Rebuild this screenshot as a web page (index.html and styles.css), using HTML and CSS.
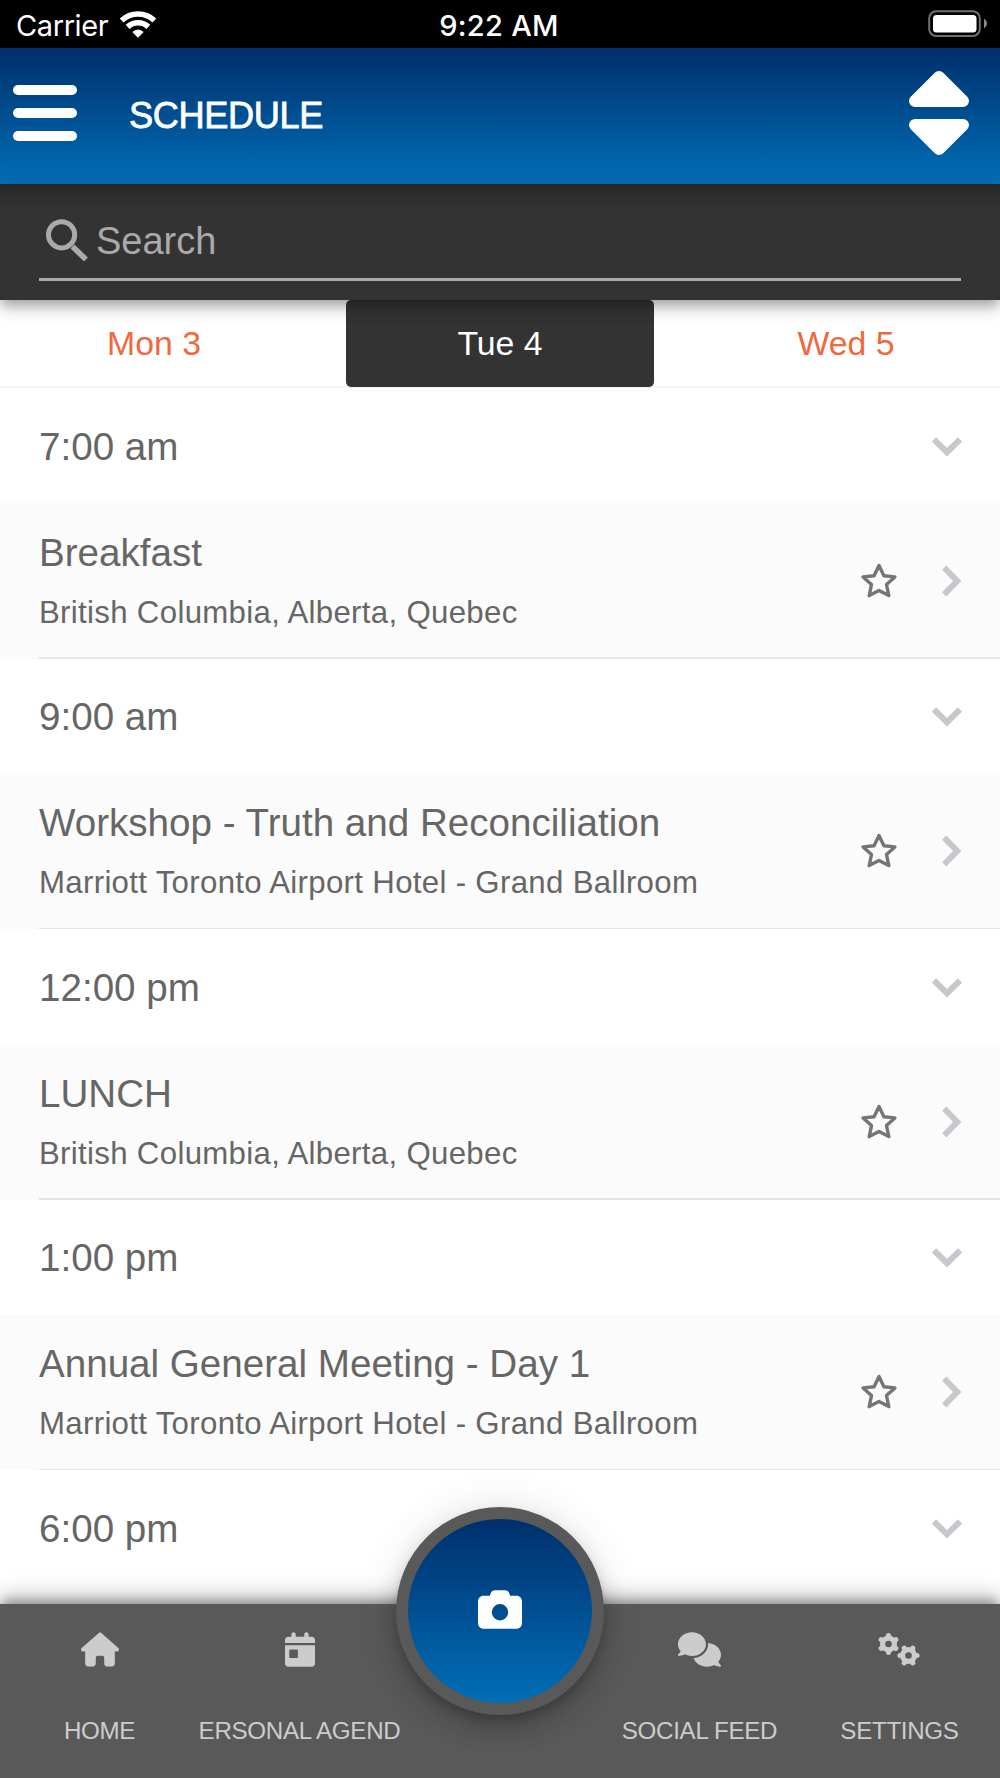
FILE: index.html
```
<!DOCTYPE html>
<html lang="en">
<head>
  <meta charset="UTF-8">
  <meta name="viewport" content="width=device-width, initial-scale=1.0">
  <title>Schedule</title>
  <link rel="stylesheet" href="styles.css">
</head>
<body>
<!-- shared icons -->
<svg class="sprite" width="0" height="0">
  <symbol id="star" viewBox="-18 -19 36 36"><path d="M0-16.5L4.9-6.2 15.900-5.100 7.500 2.500 9.800 13.600 0 8.400-9.800 13.600-7.500 2.500-15.900-5.100-4.900-6.200Z" fill="none" stroke="#757575" stroke-width="3.400" stroke-linejoin="round"/></symbol>
  <symbol id="right" viewBox="0 0 20 32"><path d="M2.200 2.700L15.200 16 2.200 29.300" fill="none" stroke="#c7c7cc" stroke-width="6"/></symbol>
  <symbol id="down" viewBox="0 0 30 20"><path d="M2 2.500L15 15.200 28 2.500" fill="none" stroke="#c7c7cc" stroke-width="6"/></symbol>
  <symbol id="gear" viewBox="-12 -12 24 24">
    <g fill="none" stroke="currentColor"><circle r="5.9" stroke-width="5.2"/>
    <path stroke-width="5" stroke-linecap="round" d="M0-7V-8.600M0 7V8.600M6.100-3.500L7.400-4.300M6.100 3.500L7.400 4.300M-6.100-3.500L-7.400-4.300M-6.100 3.500L-7.400 4.300"/></g>
  </symbol>
</svg>

<div class="status-bar">
  <div class="carrier">
    <span>Carrier</span>
    <svg width="38" height="28" viewBox="-19 -28 38 28">
      <path d="M-16.400-17.500A24 24 0 0 1 16.400-17.500M-10.400-11.100A15.200 15.200 0 0 1 10.400-11.100" fill="none" stroke="#fff" stroke-width="5.600"/>
      <path d="M0-.3L-5.700-6Q0-11 5.700-6Z" fill="#fff"/>
    </svg>
  </div>
  <div class="clock">9:22 AM</div>
  <div class="battery">
    <svg width="60" height="28" viewBox="0 0 60 28">
      <rect x="1.2" y="1.2" width="50.600" height="24.800" rx="7" fill="none" stroke="#6f6f6f" stroke-width="2"/>
      <rect x="5" y="5" width="43.500" height="17.500" rx="3.500" fill="#fff"/>
      <path d="M56 8.500Q59 10.500 59 13.500T56 18.500Z" fill="#8a8a8a"/>
    </svg>
  </div>
</div>

<header class="header">
  <button class="menu-btn"><i></i><i></i><i></i></button>
  <h1>SCHEDULE</h1>
  <svg class="sort" width="62" height="86" viewBox="0 0 62 86" fill="#fff" stroke="#fff" stroke-width="12" stroke-linejoin="round">
    <path d="M7 31L31 7 55 31Z"/>
    <path d="M7 55L31 79 55 55Z"/>
  </svg>
</header>

<div class="search-bar">
  <div class="search-field">
    <svg width="42" height="42" viewBox="0 0 42 42" fill="none" stroke="#aaa">
      <circle cx="15.600" cy="15.800" r="13.100" stroke-width="5"/>
      <path d="M26.500 27.500L40 40.500" stroke-width="5.600"/>
    </svg>
    <span>Search</span>
  </div>
</div>

<nav class="days">
  <a class="day">Mon 3</a>
  <a class="day active">Tue 4</a>
  <a class="day">Wed 5</a>
</nav>

<main class="list">
  <div class="time"><span>7:00 am</span><svg width="30" height="20"><use href="#down"/></svg></div>
  <div class="item">
    <div class="info">
      <div class="title">Breakfast</div>
      <div class="place">British Columbia, Alberta, Quebec</div>
    </div>
    <svg class="star" width="36" height="36"><use href="#star"/></svg>
    <svg width="20" height="32"><use href="#right"/></svg>
  </div>

  <div class="time"><span>9:00 am</span><svg width="30" height="20"><use href="#down"/></svg></div>
  <div class="item">
    <div class="info">
      <div class="title">Workshop - Truth and Reconciliation</div>
      <div class="place">Marriott Toronto Airport Hotel - Grand Ballroom</div>
    </div>
    <svg class="star" width="36" height="36"><use href="#star"/></svg>
    <svg width="20" height="32"><use href="#right"/></svg>
  </div>

  <div class="time"><span>12:00 pm</span><svg width="30" height="20"><use href="#down"/></svg></div>
  <div class="item">
    <div class="info">
      <div class="title">LUNCH</div>
      <div class="place">British Columbia, Alberta, Quebec</div>
    </div>
    <svg class="star" width="36" height="36"><use href="#star"/></svg>
    <svg width="20" height="32"><use href="#right"/></svg>
  </div>

  <div class="time"><span>1:00 pm</span><svg width="30" height="20"><use href="#down"/></svg></div>
  <div class="item">
    <div class="info">
      <div class="title">Annual General Meeting - Day 1</div>
      <div class="place">Marriott Toronto Airport Hotel - Grand Ballroom</div>
    </div>
    <svg class="star" width="36" height="36"><use href="#star"/></svg>
    <svg width="20" height="32"><use href="#right"/></svg>
  </div>

  <div class="time"><span>6:00 pm</span><svg width="30" height="20"><use href="#down"/></svg></div>
</main>

<footer class="tabbar">
  <a class="tab">
    <svg width="38" height="35" viewBox="0 0 576 512"><path fill="currentColor" d="M575.8 255.5c0 18-15 32.1-32 32.1h-32l.7 160.2V472c0 22.1-17.900 40-40 40H392c-22.100 0-40-17.900-40-40V384c0-17.700-14.300-32-32-32H256c-17.700 0-32 14.300-32 32v88c0 22.100-17.900 40-40 40H104c-22.100 0-40-17.900-40-40V287.600H32c-18 0-32-14-32-32.100c0-9 3-17 10-24L266.400 8c7-7 15-8 22-8s15 2 21 7L564.800 231.500c8 7 12 15 11 24z"/></svg>
    <span>HOME</span>
  </a>
  <a class="tab">
    <svg width="30" height="35" viewBox="0 0 448 512"><path fill="currentColor" d="M128 0c17.700 0 32 14.300 32 32V64H288V32c0-17.700 14.300-32 32-32s32 14.300 32 32V64h48c26.500 0 48 21.500 48 48v48H0V112C0 85.500 21.500 64 48 64H96V32c0-17.700 14.300-32 32-32zM0 192H448V464c0 26.500-21.500 48-48 48H48c-26.500 0-48-21.500-48-48V192zm80 64c-8.800 0-16 7.200-16 16v96c0 8.800 7.200 16 16 16h96c8.800 0 16-7.200 16-16V272c0-8.800-7.200-16-16-16H80z"/></svg>
    <span>ERSONAL AGEND</span>
  </a>
  <div class="tab">
    <a class="camera">
      <svg width="44" height="39" viewBox="0 32 512 448"><path fill="#fff" d="M149.100 64.800L138.700 96H64C28.700 96 0 124.700 0 160V416c0 35.300 28.700 64 64 64H448c35.300 0 64-28.700 64-64V160c0-35.300-28.700-64-64-64H373.300L362.900 64.800C356.400 45.200 338.100 32 317.400 32H194.600c-20.700 0-39 13.200-45.500 32.800zM256 192a96 96 0 1 1 0 192 96 96 0 1 1 0-192z"/></svg>
    </a>
  </div>
  <a class="tab">
    <svg width="43" height="35" viewBox="0 0 640 512"><path fill="currentColor" d="M208 352c114.900 0 208-78.800 208-176S322.900 0 208 0S0 78.800 0 176c0 38.600 14.700 74.300 39.600 103.400c-3.500 9.400-8.700 17.700-14.200 24.700c-4.800 6.200-9.700 11-13.300 14.300c-1.800 1.600-3.300 2.900-4.300 3.700l-1.300 1C1 327.200-1.400 334.400 .8 340.900S9.100 352 16 352c21.800 0 43.800-5.600 62.100-12.500c9.200-3.500 17.800-7.400 25.200-11.400C134.100 343.300 169.800 352 208 352zM448 176c0 112.300-99.100 196.900-216.500 207C255.800 457.400 336.400 512 432 512c38.200 0 73.900-8.700 104.700-23.900c7.500 4 16 7.900 25.200 11.400c18.300 6.900 40.300 12.500 62.100 12.500c6.900 0 13.100-4.500 15.200-11.100c2.100-6.600-.2-13.800-5.800-17.900l-1.300-1c-1-.8-2.500-2-4.300-3.700c-3.600-3.300-8.500-8.100-13.300-14.300c-5.500-7-10.700-15.400-14.200-24.700c24.900-29 39.600-64.700 39.600-103.400c0-92.800-84.900-168.900-192.600-175.500c.4 5.100 .6 10.300 .6 15.500z"/></svg>
    <span>SOCIAL FEED</span>
  </a>
  <a class="tab">
    <svg width="43" height="35" viewBox="0 0 43 35">
      <use href="#gear" x="-12" y="-12" width="24" height="24" transform="translate(10.500 12)"/>
      <use href="#gear" x="-12" y="-12" width="24" height="24" transform="translate(30.500 23.500) rotate(90)"/>
    </svg>
    <span>SETTINGS</span>
  </a>
</footer>
</body>
</html>
```
FILE: styles.css
```
* {
  box-sizing: border-box;
}
body {
  margin: 0;
  height: 1778px;
  overflow: hidden;
  display: flex;
  flex-direction: column;
  background: #fff;
  color: #666;
  font-family: "Liberation Sans", Arial, sans-serif;
}
svg {
  display: block;
  flex: none;
}
.sprite {
  position: absolute;
}
.status-bar {
  height: 48px;
  flex: none;
  padding: 0 12px 0 16px;
  display: grid;
  grid-template-columns: 1fr auto 1fr;
  align-items: center;
  background: #000;
  color: #fff;
  font-family: Inter, sans-serif;
  font-size: 29px;
}
.carrier {
  display: flex;
  align-items: center;
  gap: 11px;
  letter-spacing: -0.4px;
}
.clock {
  padding-top: 2px;
  margin-left: -6px;
  font-weight: 500;
  letter-spacing: 0.3px;
}
.carrier span {
  padding-top: 2px;
}
.battery {
  justify-self: end;
}
.header {
  height: 136px;
  flex: none;
  padding: 0 30px 0 13px;
  display: flex;
  align-items: center;
  background: linear-gradient(#002f6c, #006fb7);
}
.menu-btn {
  width: 64px;
  padding: 0;
  margin-top: -7px;
  border: none;
  background: none;
  display: flex;
  flex-direction: column;
  gap: 13px;
}
.menu-btn i {
  height: 10px;
  border-radius: 5px;
  background: #fff;
}
.header h1 {
  margin: 0 0 0 52px;
  flex: 1;
  color: #fff;
  font-size: 36.200px;
  font-weight: normal;
  letter-spacing: -0.4px;
  -webkit-text-stroke: 0.8px #fff;
}
.sort {
  margin-top: -7px;
}
.search-bar {
  position: relative;
  z-index: 2;
  height: 116px;
  flex: none;
  padding: 20px 39px;
  background: linear-gradient(#252525, #2d2d2d 10px, #333 28px);
  box-shadow: 0 5px 10px -2px rgba(0,0,0,0.2), 0 10px 12px rgba(0,0,0,0.14), 0 2px 24px rgba(0,0,0,0.12);
}
.search-field {
  height: 77px;
  padding: 0 7px 2px;
  display: flex;
  align-items: center;
  gap: 8px;
  border-bottom: 3px solid #aaa;
  color: #aaa;
  font-size: 38px;
}
.search-field span {
  padding-top: 2px;
}
.days {
  height: 88px;
  flex: none;
  display: flex;
  justify-content: space-between;
  border-bottom: 2px solid #f2f2f2;
}
.day {
  width: 308px;
  height: 87px;
  display: flex;
  align-items: center;
  justify-content: center;
  color: #f0693e;
  font-size: 33.800px;
}
.day.active {
  background: #333;
  color: #fff;
  border-radius: 5px;
}
.list {
  flex: 1;
  min-height: 0;
  overflow: hidden;
}
.time {
  height: 115px;
  margin-top: -0.500px;
  padding: 3px 38px 0 39px;
  display: flex;
  align-items: center;
  justify-content: space-between;
  font-size: 38.600px;
}
.item {
  position: relative;
  height: 156px;
  padding: 0 38px 0 39px;
  display: flex;
  align-items: center;
  background: #fbfbfb;
}
.item::after {
  content: "";
  position: absolute;
  left: 39px;
  right: 0;
  bottom: 0;
  height: 1.500px;
  background: #e4e4e4;
}
.info {
  flex: 1;
}
.title {
  font-size: 38.600px;
  line-height: 44px;
  margin-bottom: 20px;
}
.place {
  font-size: 31.200px;
  line-height: 36px;
  letter-spacing: 0.32px;
}
.star {
  margin-right: 45px;
}
.tabbar {
  position: relative;
  height: 174px;
  flex: none;
  display: flex;
  background: #595959;
  color: #ccc;
  box-shadow: 0 -5px 10px -2px rgba(0,0,0,0.3), 0 -8px 20px rgba(0,0,0,0.25);
}
.tab {
  width: 200px;
  padding: 28px 1px 0 0;
  display: flex;
  flex-direction: column;
  align-items: center;
  gap: 50px;
  white-space: nowrap;
  font-size: 24.150px;
  letter-spacing: -0.3px;
}
/* round button sits over the top edge of the bar */
.camera {
  position: absolute;
  top: -97px;
  left: 396px;
  width: 208px;
  height: 208px;
  padding-bottom: 4px;
  display: flex;
  align-items: center;
  justify-content: center;
  border: 12px solid transparent;
  border-radius: 50%;
  background: linear-gradient(#002f6c, #006fb7) padding-box, linear-gradient(#595959, #595959) border-box;
  box-shadow: 0 7px 12px -2px rgba(0,0,0,0.2), 0 14px 24px rgba(0,0,0,0.14), 0 2px 43px rgba(0,0,0,0.12);
}
```
